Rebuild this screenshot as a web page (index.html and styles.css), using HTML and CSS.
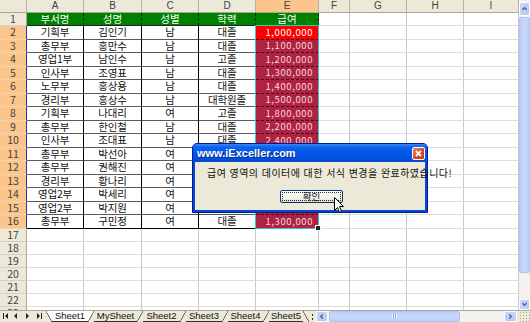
FILE: index.html
```html
<!DOCTYPE html>
<html lang="ko">
<head>
<meta charset="utf-8">
<title>Excel</title>
<link rel="stylesheet" href="styles.css">
</head>
<body>
<div class="app">
  <div class="main">
    <div class="sheet">
      <div class="row hdr">
        <div class="corner"></div><div class="ch">A</div><div class="ch">B</div><div class="ch">C</div><div class="ch">D</div><div class="ch s">E</div><div class="ch">F</div><div class="ch">G</div><div class="ch">H</div><div class="ch">I</div>
      </div>
      <div class="row">
        <div class="rh">1</div><div class="g">부서명</div><div class="g">성명</div><div class="g">성별</div><div class="g">학력</div><div class="g">급여</div><div class="e"></div><div class="e"></div><div class="e"></div><div class="e"></div>
      </div>
      <div class="row t">
        <div class="rh s">2</div><div class="d">기획부</div><div class="d">김인기</div><div class="d">남</div><div class="d">대졸</div><div class="m a">1,000,000</div><div class="e"></div><div class="e"></div><div class="e"></div><div class="e"></div>
      </div>
      <div class="row">
        <div class="rh s">3</div><div class="d">총무부</div><div class="d">홍만수</div><div class="d">남</div><div class="d">대졸</div><div class="m">1,100,000</div><div class="e"></div><div class="e"></div><div class="e"></div><div class="e"></div>
      </div>
      <div class="row t">
        <div class="rh s">4</div><div class="d">영업1부</div><div class="d">남인수</div><div class="d">남</div><div class="d">고졸</div><div class="m">1,200,000</div><div class="e"></div><div class="e"></div><div class="e"></div><div class="e"></div>
      </div>
      <div class="row">
        <div class="rh s">5</div><div class="d">인사부</div><div class="d">조영표</div><div class="d">남</div><div class="d">대졸</div><div class="m">1,300,000</div><div class="e"></div><div class="e"></div><div class="e"></div><div class="e"></div>
      </div>
      <div class="row t">
        <div class="rh s">6</div><div class="d">노무부</div><div class="d">홍상용</div><div class="d">남</div><div class="d">대졸</div><div class="m">1,400,000</div><div class="e"></div><div class="e"></div><div class="e"></div><div class="e"></div>
      </div>
      <div class="row">
        <div class="rh s">7</div><div class="d">경리부</div><div class="d">홍상수</div><div class="d">남</div><div class="d">대학원졸</div><div class="m">1,500,000</div><div class="e"></div><div class="e"></div><div class="e"></div><div class="e"></div>
      </div>
      <div class="row t">
        <div class="rh s">8</div><div class="d">기획부</div><div class="d">나대리</div><div class="d">여</div><div class="d">고졸</div><div class="m">1,800,000</div><div class="e"></div><div class="e"></div><div class="e"></div><div class="e"></div>
      </div>
      <div class="row">
        <div class="rh s">9</div><div class="d">총무부</div><div class="d">한인철</div><div class="d">남</div><div class="d">대졸</div><div class="m">2,200,000</div><div class="e"></div><div class="e"></div><div class="e"></div><div class="e"></div>
      </div>
      <div class="row t">
        <div class="rh s">10</div><div class="d">인사부</div><div class="d">조대표</div><div class="d">남</div><div class="d">대졸</div><div class="m">2,400,000</div><div class="e"></div><div class="e"></div><div class="e"></div><div class="e"></div>
      </div>
      <div class="row">
        <div class="rh s">11</div><div class="d">총무부</div><div class="d">박선아</div><div class="d">여</div><div class="d">대졸</div><div class="m">1,600,000</div><div class="e"></div><div class="e"></div><div class="e"></div><div class="e"></div>
      </div>
      <div class="row t">
        <div class="rh s">12</div><div class="d">총무부</div><div class="d">권해진</div><div class="d">여</div><div class="d">고졸</div><div class="m">1,200,000</div><div class="e"></div><div class="e"></div><div class="e"></div><div class="e"></div>
      </div>
      <div class="row">
        <div class="rh s">13</div><div class="d">경리부</div><div class="d">황나리</div><div class="d">여</div><div class="d">대졸</div><div class="m">1,400,000</div><div class="e"></div><div class="e"></div><div class="e"></div><div class="e"></div>
      </div>
      <div class="row t">
        <div class="rh s">14</div><div class="d">영업2부</div><div class="d">박세리</div><div class="d">여</div><div class="d">대졸</div><div class="m">1,500,000</div><div class="e"></div><div class="e"></div><div class="e"></div><div class="e"></div>
      </div>
      <div class="row">
        <div class="rh s">15</div><div class="d">영업2부</div><div class="d">박지원</div><div class="d">여</div><div class="d">대졸</div><div class="m">1,300,000</div><div class="e"></div><div class="e"></div><div class="e"></div><div class="e"></div>
      </div>
      <div class="row t last">
        <div class="rh s">16</div><div class="d">총무부</div><div class="d">구민정</div><div class="d">여</div><div class="d">대졸</div><div class="m">1,300,000</div><div class="e"></div><div class="e"></div><div class="e"></div><div class="e"></div>
      </div>
      <div class="row"><div class="rh">17</div><div class="e"></div><div class="e"></div><div class="e"></div><div class="e"></div><div class="e"></div><div class="e"></div><div class="e"></div><div class="e"></div><div class="e"></div></div>
      <div class="row"><div class="rh">18</div><div class="e"></div><div class="e"></div><div class="e"></div><div class="e"></div><div class="e"></div><div class="e"></div><div class="e"></div><div class="e"></div><div class="e"></div></div>
      <div class="row"><div class="rh">19</div><div class="e"></div><div class="e"></div><div class="e"></div><div class="e"></div><div class="e"></div><div class="e"></div><div class="e"></div><div class="e"></div><div class="e"></div></div>
      <div class="row"><div class="rh">20</div><div class="e"></div><div class="e"></div><div class="e"></div><div class="e"></div><div class="e"></div><div class="e"></div><div class="e"></div><div class="e"></div><div class="e"></div></div>
      <div class="row"><div class="rh">21</div><div class="e"></div><div class="e"></div><div class="e"></div><div class="e"></div><div class="e"></div><div class="e"></div><div class="e"></div><div class="e"></div><div class="e"></div></div>
      <div class="row"><div class="rh">22</div><div class="e"></div><div class="e"></div><div class="e"></div><div class="e"></div><div class="e"></div><div class="e"></div><div class="e"></div><div class="e"></div><div class="e"></div></div>
      <div class="row"><div class="rh">23</div><div class="e"></div><div class="e"></div><div class="e"></div><div class="e"></div><div class="e"></div><div class="e"></div><div class="e"></div><div class="e"></div><div class="e"></div></div>
      <div class="selbox"></div>
    </div>
    <div class="vscroll">
      <div class="vbtn"><svg width="11" height="14" viewBox="0 0 11 14"><polyline points="3,8 5.5,5.5 8,8" fill="none" stroke="#4d6185" stroke-width="1.6"/></svg></div>
      <div class="vthumb"></div>
      <div class="vtrack"></div>
      <div class="vbtn dn"><svg width="11" height="11" viewBox="0 0 11 11"><polyline points="3,4 5.5,6.5 8,4" fill="none" stroke="#4d6185" stroke-width="1.6"/></svg></div>
    </div>
  </div>
  <div class="bottom">
    <div class="nav">
      <svg width="46" height="12" viewBox="0 0 46 12">
        <rect x="3" y="3" width="1" height="6" fill="#222"/>
        <polygon points="8,3 5,6 8,9" fill="#222"/>
        <polygon points="17,3 14,6 17,9" fill="#222"/>
        <polygon points="26,3 29,6 26,9" fill="#222"/>
        <polygon points="37,3 40,6 37,9" fill="#222"/>
        <rect x="41" y="3" width="1" height="6" fill="#222"/>
      </svg>
    </div>
    <span class="edge back-act"></span>
    <span class="tab act w36">Sheet1</span>
    <span class="edge fwd-act"></span>
    <span class="tab w43">MySheet</span>
    <span class="edge fwd"></span>
    <span class="tab w37">Sheet2</span>
    <span class="edge fwd"></span>
    <span class="tab w36">Sheet3</span>
    <span class="edge fwd"></span>
    <span class="tab w35">Sheet4</span>
    <span class="edge fwd"></span>
    <span class="tab w34">Sheet5</span>
    <span class="edge back"></span>
    <span class="split"></span>
    <div class="hscroll">
      <div class="hbtn"><svg width="12" height="11" viewBox="0 0 12 11"><polyline points="7,3 4.5,5.5 7,8" fill="none" stroke="#4d6185" stroke-width="1.6"/></svg></div>
      <div class="hthumb"><span class="grip"></span></div>
      <div class="htrack"></div>
      <div class="hbtn r"><svg width="13" height="11" viewBox="0 0 13 11"><polyline points="5,3 7.5,5.5 5,8" fill="none" stroke="#4d6185" stroke-width="1.6"/></svg></div>
    </div>
    <div class="sizegrip"></div>
  </div>

  <div class="dialog">
    <div class="titlebar">
      <span class="ttl">www.iExceller.com</span>
      <span class="close"><svg width="11" height="11" viewBox="0 0 11 11"><path d="M3 3 L8 8 M8 3 L3 8" stroke="#fff" stroke-width="1.8"/></svg></span>
    </div>
    <div class="dbody">
      <p class="msg">급여 영역의 데이터에 대한 서식 변경을 완료하였습니다!</p>
      <div class="btn"><span class="focus">확인</span></div>
    </div>
  </div>

  <svg class="cursor" width="12" height="18" viewBox="0 0 12 18"><path d="M0.5 0.5 L0.5 13.5 L3.5 10.5 L5.5 15.5 L7.5 14.5 L5.5 9.5 L9.5 9.5 Z" fill="#fff" stroke="#000" stroke-width="1"/></svg>
</div>
</body>
</html>
```

FILE: styles.css
```css
* { box-sizing: border-box; margin: 0; padding: 0; }
html, body { width: 530px; height: 322px; overflow: hidden; background: #fff; }
body { font-family: "Noto Sans CJK KR", "Noto Sans", sans-serif; }

.app { position: relative; width: 530px; height: 322px; overflow: hidden; }
.main { display: flex; height: 310px; }
.sheet { position: relative; width: 519px; height: 310px; overflow: hidden; }

.row {
  display: grid;
  grid-template-columns: 27px 57px 58px 57px 57px 63px 31px 57px 57px 55px;
  grid-template-rows: 13px;
  height: 13px;
}
.row.t { height: 14px; grid-template-rows: 14px; }
.row > div {
  display: flex; align-items: center; justify-content: center;
  border-right: 1px solid #c8c8c8;
  border-bottom: 1px solid #dcdcdc;
  font-size: 10.5px; line-height: 1; white-space: nowrap;
  min-height: 0;
}

.row > .corner, .row > .ch {
  background: #ece9d8;
  border-right: 1px solid #b5b29f;
  border-bottom: 1px solid #a9a692;
  color: #444;
  font-family: "Liberation Sans", Arial, sans-serif; font-size: 10px;
}
.row > .ch.s { background: #fbc58b; }

.row > .rh {
  background: #ece9d8;
  border-right: 1px solid #aca899;
  border-bottom: 1px solid #d6d2c2;
  color: #444; font-size: 10.5px;
}
.row > .rh.s {
  background: #fbc58b;
  border-right: 1px solid #2636b0;
  border-bottom: 1px solid #f2d3ab;
}

.row > .g {
  background: #008000; color: #f2fff2;
  border-right: 1px dashed #0b2a0b;
  border-bottom: 1px solid #222;
}
.row > .d {
  color: #111;
  border-right: 1px solid #000;
  border-bottom: 1px solid #5a5a5a;
  letter-spacing: -0.2px;
}
.row.last > .d { border-bottom-color: #000; }
.row > .m {
  justify-content: flex-end;
  padding-right: 5px;
  background: #b02242;
  color: #f6d6de;
  border-right: 1px solid #7a1030;
  border-bottom: 1px dashed #3c0a22;
  font-size: 9.5px;
  letter-spacing: 0.6px;
}
.row > .m.a { background: #ff0000; color: #fff; }
.row.last > .m { border-bottom-color: #000; }

.selbox {
  position: absolute; left: 255px; top: 25px; width: 64px; height: 204px;
  border: 1px solid #35c6c8;
}
.selbox::after {
  content: ""; position: absolute; right: -3px; bottom: -3px;
  width: 4px; height: 4px; background: #222; border: 1px solid #fff;
}

/* vertical scrollbar */
.vscroll {
  width: 11px; height: 310px; background: #f3f2ec;
  display: flex; flex-direction: column; padding-top: 2px;
}
.vbtn {
  height: 14px; border: 1px solid #fff; border-radius: 2px;
  background: linear-gradient(to right, #c6d5fc, #b6c9f7);
  display: flex; align-items: center; justify-content: center;
}
.vbtn.dn { height: 11px; }
.vthumb {
  height: 256px; margin-top: 1px; border-radius: 2px;
  border: 1px solid #b0c4f2;
  background: linear-gradient(to right, #bccffa, #c9d8fd 50%, #bdd0fa);
}
.vtrack { flex: 1; }

/* bottom bar */
.bottom {
  display: flex; height: 12px; background: #ece9d8;
  border-top: 1px solid #a8a8a0;
}
.nav { width: 46px; height: 11px; display: flex; align-items: center; }
.nav svg { display: block; margin-top: -1px; }
.edge { width: 6px; height: 11px; flex: none; }
.edge.fwd { background: linear-gradient(to bottom right, transparent calc(50% - 0.6px), #333 50%, transparent calc(50% + 0.6px)); }
.edge.back { background: linear-gradient(to bottom left, transparent calc(50% - 0.6px), #333 50%, transparent calc(50% + 0.6px)); }
.edge.back-act { background: linear-gradient(to bottom left, #fff calc(50% - 0.6px), #333 50%, transparent calc(50% + 0.6px)); }
.edge.fwd-act { background: linear-gradient(to bottom right, #fff calc(50% - 0.6px), #333 50%, transparent calc(50% + 0.6px)); }
.tab {
  flex: none; height: 11px;
  display: flex; align-items: center; justify-content: center;
  font-family: "Liberation Sans", Arial, sans-serif; font-size: 9.5px; color: #111;
  border-bottom: 1px solid #333;
  line-height: 1;
}
.tab.act { background: #fff; }
.w34 { width: 34px; } .w35 { width: 35px; } .w36 { width: 36px; } .w37 { width: 37px; } .w43 { width: 43px; }
.split { width: 7px; height: 11px; position: relative; flex: none; }
.split::before, .split::after {
  content: ""; position: absolute; left: 3px; width: 1px; height: 2px; background: #333;
}
.split::before { top: 3px; }
.split::after { top: 7px; }

.hscroll { width: 201px; height: 11px; display: flex; background: #f3f2ec; }
.hbtn {
  width: 12px; height: 11px; border: 1px solid #fff; border-radius: 2px;
  background: linear-gradient(#c6d5fc, #b6c9f7);
  display: flex; align-items: center; justify-content: center; flex: none;
}
.hbtn.r { width: 13px; }
.hthumb {
  width: 131px; height: 11px; margin-left: 1px; border-radius: 2px;
  border: 1px solid #b0c4f2;
  background: linear-gradient(#bccffa, #c9d8fd 50%, #bdd0fa);
  display: flex; align-items: center; justify-content: center;
}
.grip {
  width: 5px; height: 5px;
  background: repeating-linear-gradient(to right, #eef3ff 0 1px, #8fa8e0 1px 2px);
}
.htrack { flex: 1; }
.sizegrip {
  width: 11px; height: 11px; margin-left: 2px;
  background:
    radial-gradient(circle, #a5a294 0.8px, transparent 1px) 0 0 / 3px 3px;
}

/* message box */
.dialog {
  position: absolute; left: 192px; top: 143px; width: 236px; height: 70px;
  background: #0846d6;
  border: 1px solid #001c96;
  border-radius: 5px 5px 0 0;
  display: flex; flex-direction: column;
  padding: 0 2px 2px;
}
.titlebar {
  height: 18px; margin: 0 -2px;
  border-radius: 4px 4px 0 0;
  display: flex; align-items: center; justify-content: space-between;
  padding: 0 2px 0 4px;
  background: linear-gradient(#3b87f6 0%, #0c61ef 18%, #0056e6 50%, #0052df 80%, #0846cc 100%);
}
.ttl {
  color: #fff; font-family: "Liberation Sans", Arial, sans-serif;
  font-weight: bold; font-size: 11px; line-height: 1;
  text-shadow: 1px 1px 0 #0b2a8a;
}
.close {
  width: 13px; height: 13px; border: 1px solid #fff; border-radius: 2px;
  background: linear-gradient(135deg, #f08a6c, #d9482a 55%, #c13a1c);
  display: flex; align-items: center; justify-content: center;
}
.close svg { display: block; }
.dbody {
  flex: 1; background: #ece9d8;
  display: flex; flex-direction: column; align-items: flex-start;
  padding-top: 5px;
}
.msg {
  margin-left: 12px; height: 11px;
  font-size: 10px; line-height: 11px; color: #111;
  letter-spacing: 0.45px; white-space: nowrap;
}
.btn {
  margin-top: 12px; margin-left: 85px;
  width: 63px; height: 13px;
  border: 1px solid #003c74; border-radius: 2px;
  background: linear-gradient(#ffffff, #f0f0ea 70%, #d8d5c8);
  padding: 1px;
  display: flex;
}
.focus {
  flex: 1; border: 1px dotted #333;
  display: flex; align-items: center; justify-content: center;
  font-size: 9.5px; line-height: 1; color: #111;
}

.cursor { position: absolute; left: 334px; top: 197px; display: block; }
```
